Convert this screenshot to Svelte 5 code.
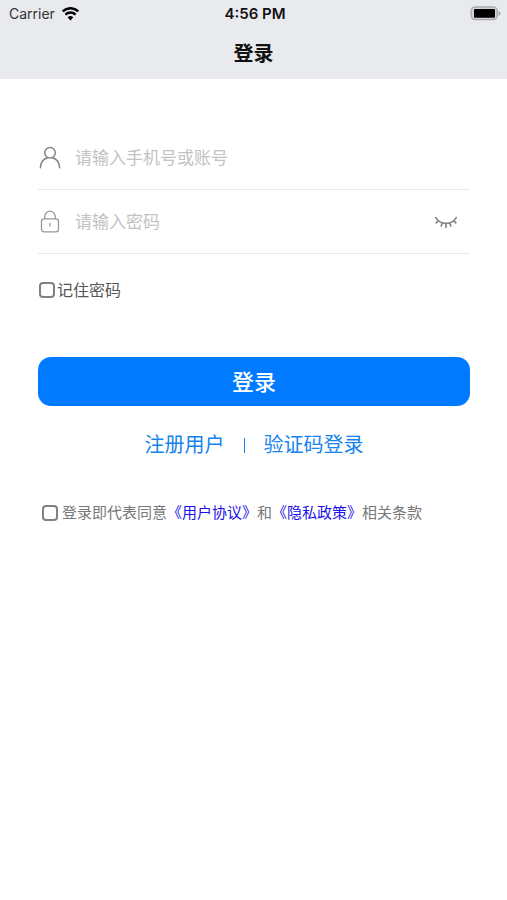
<script>
  let account = $state('');
  let password = $state('');
  let visible = $state(false);
  let remember = $state(false);
  let agreed = $state(false);
</script>

<div class="page">
  <header>
    <div class="status">
      <div class="carrier">
        <span>Carrier</span>
        <svg width="19" height="14" viewBox="0 0 18 14" aria-hidden="true">
          <path d="M1.2 4.400a11.200 11.200 0 0 1 15.600 0" fill="none" stroke="#000" stroke-width="2.500" />
          <path d="M3.900 7.600a7.200 7.200 0 0 1 10.200 0" fill="none" stroke="#000" stroke-width="2.300" />
          <path d="M6.200 10.300a4.200 4.200 0 0 1 5.600 0L9 13.400z" fill="#000" />
        </svg>
      </div>
      <span class="time">4:56 PM</span>
      <div class="battery">
        <svg width="31" height="16" viewBox="0 0 31 16" aria-hidden="true">
          <rect x="1.200" y="1" width="26" height="12.600" rx="4" fill="#d2d3d5" stroke="#a9aaad" stroke-width="1.400" />
          <rect x="4" y="3" width="21" height="8.800" rx="1" fill="#000" />
          <path d="M28.500 5.100q2 .8 2 2.400t-2 2.400z" fill="#a5a6a9" />
        </svg>
      </div>
    </div>
    <h1>登录</h1>
  </header>

  <form onsubmit={(e) => e.preventDefault()}>
    <div class="field">
      <label for="account" aria-label="手机号或账号">
        <svg width="24" height="24" viewBox="0 0 24 24" fill="none" stroke="#858585" stroke-width="1.500" stroke-linecap="round">
          <circle cx="12" cy="6.800" r="5.300" />
          <path d="M2.400 21.800c.3-5.800 3.300-9 7.200-10M21.600 21.800c-.3-5.800-3.300-9-7.200-10" />
        </svg>
      </label>
      <input id="account" type="text" placeholder="请输入手机号或账号" bind:value={account} />
    </div>
    <div class="field">
      <label for="password" aria-label="密码">
        <svg width="24" height="24" viewBox="0 0 24 24" fill="none" stroke="#999" stroke-width="1.300" stroke-linecap="round">
          <rect x="3.500" y="8.800" width="17" height="13" rx="2.600" />
          <path d="M6.800 8.600V6.400a5.200 5.200 0 0 1 10.400 0v2.200M12 13.400v2.600" />
        </svg>
      </label>
      <input id="password" type={visible ? 'text' : 'password'} placeholder="请输入密码" bind:value={password} />
      <button class="eye" type="button" aria-label="显示密码" onclick={() => (visible = !visible)}>
        <svg width="24" height="16" viewBox="0 0 24 16" fill="none" stroke="#858585" stroke-width="1.700" stroke-linecap="round">
          <path d="M1.800 3.600C6.300 11.200 17.700 11.200 22.200 3.600M4.300 6.600L2.200 8.900M8.200 9.100L7.200 12M12 9.600v3.600M15.800 9.100l1 2.900M19.700 6.600l2.100 2.300" />
        </svg>
      </button>
    </div>

    <label class="remember">
      <input type="checkbox" bind:checked={remember} />
      <span>记住密码</span>
    </label>

    <button class="submit" type="submit">登录</button>

    <nav>
      <a href="#register">注册用户</a>
      <span class="divider"></span>
      <a href="#code">验证码登录</a>
    </nav>

    <div class="terms">
      <input id="agree" type="checkbox" bind:checked={agreed} />
      <label for="agree">登录即代表同意<a href="#agreement">《用户协议》</a>和<a href="#privacy">《隐私政策》</a>相关条款</label>
    </div>
  </form>
</div>

<style>
  :global(body) {
    margin: 0;
    background: #fff;
  }
  .page {
    font-family: "Inter", "Noto Sans CJK SC", sans-serif;
    color: #555;
  }
  header {
    background: #e9eaee;
    padding-bottom: 10px;
  }
  .status {
    display: grid;
    grid-template-columns: 1fr auto 1fr;
    align-items: center;
    height: 27px;
    padding: 0 6px 0 9px;
    font-size: 14px;
    color: #333;
  }
  .carrier {
    display: flex;
    align-items: center;
    gap: 6px;
  }
  .time {
    font-size: 15px;
    font-weight: 600;
    color: #111;
  }
  .battery {
    display: flex;
    justify-content: flex-end;
  }
  svg {
    display: block;
  }
  h1 {
    margin: 0;
    padding-top: 12px;
    font-size: 20px;
    line-height: 30px;
    font-weight: 700;
    text-align: center;
    color: #111;
  }
  form {
    padding: 47px 37px 0 38px;
  }
  .field {
    display: flex;
    align-items: center;
    height: 63px;
    border-bottom: 1px solid #e8e8e8;
  }
  .field input {
    flex: 1;
    min-width: 0;
    margin-left: 13px;
    padding: 0;
    border: 0;
    outline: 0;
    background: none;
    font: inherit;
    font-size: 17px;
    color: #333;
  }
  .field input::placeholder {
    color: #c2c2c2;
    opacity: 1;
  }
  button {
    border: 0;
    font-family: inherit;
    cursor: pointer;
  }
  .eye {
    margin-right: 12px;
    padding: 0;
    background: none;
  }
  a {
    text-decoration: none;
  }
  input[type="checkbox"] {
    appearance: none;
    flex: none;
    box-sizing: border-box;
    width: 16px;
    height: 16px;
    margin: 0;
    border: 2px solid #808080;
    border-radius: 4px;
    background: #fff;
  }
  input[type="checkbox"]:checked {
    background: #007aff;
    border-color: #007aff;
  }
  .remember {
    display: flex;
    align-items: center;
    gap: 2px;
    width: max-content;
    margin: 24px 0 0 1px;
    font-size: 16px;
    line-height: 24px;
  }
  .submit {
    display: block;
    width: 100%;
    height: 49px;
    margin-top: 55px;
    padding: 0 0 4px;
    border-radius: 13px;
    background: #007aff;
    font-size: 22px;
    font-weight: 500;
    color: #fff;
  }
  nav {
    display: flex;
    justify-content: center;
    align-items: center;
    gap: 19px;
    margin-top: 24px;
    font-size: 20px;
    line-height: 30px;
  }
  nav a {
    color: #1683ee;
  }
  .divider {
    width: 1px;
    height: 15px;
    background: #1683ee;
  }
  .terms {
    display: flex;
    align-items: center;
    gap: 4px;
    margin: 41px 0 0 4px;
    font-size: 15px;
    line-height: 24px;
    color: #777;
  }
  .terms a {
    color: #1c10e8;
  }
</style>
